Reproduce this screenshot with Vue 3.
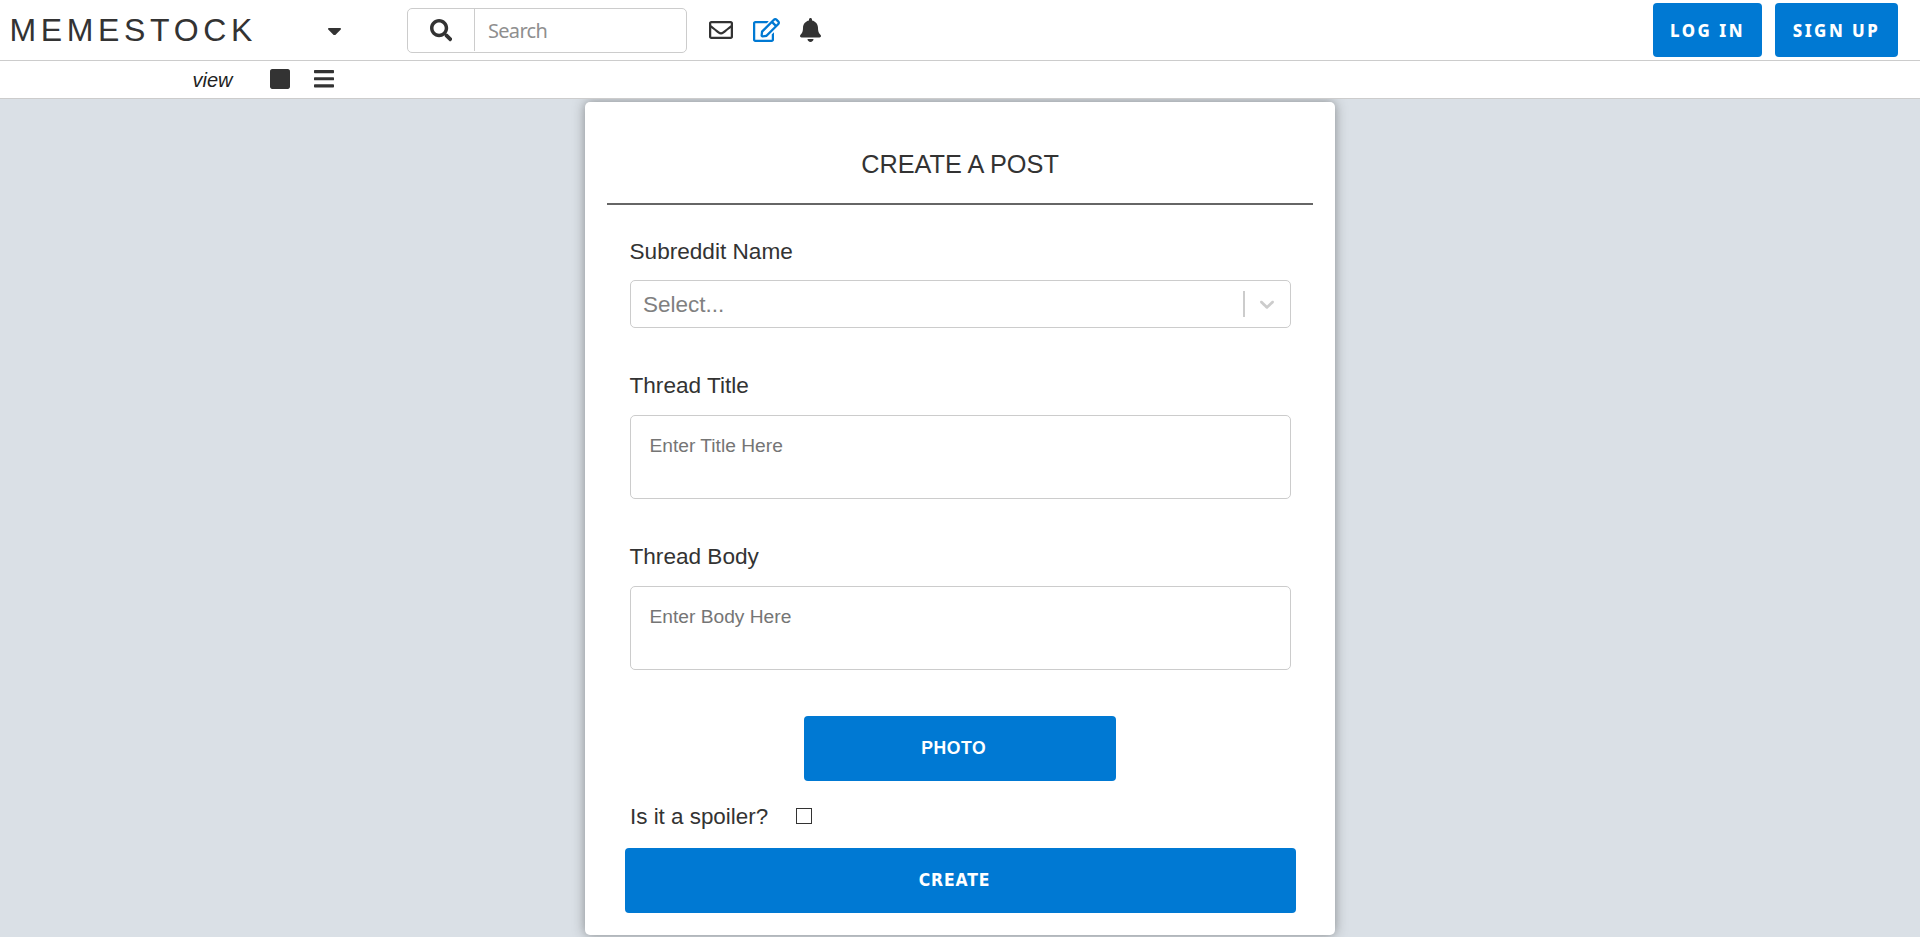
<script setup>
import { ref } from 'vue'

const search = ref('')
const title = ref('')
const body = ref('')
const spoiler = ref(false)
</script>

<template>
  <div class="page">
    <header class="navbar">
      <a class="brand">MEMESTOCK</a>
      <svg class="caret" viewBox="12 192 296 169" preserveAspectRatio="none"><path d="M31.3 192h257.3c17.8 0 26.7 21.5 14.1 34.1L174.1 354.800c-7.8 7.800-20.500 7.800-28.300 0L17.200 226.100C4.600 213.500 13.500 192 31.300 192z" /></svg>
      <form class="search" @submit.prevent>
        <button class="search-btn" type="submit" aria-label="Search">
          <svg viewBox="0 0 512 512"><path d="M505 442.700L405.300 343c-4.500-4.500-10.600-7-17-7H372c27.600-35.300 44-79.700 44-128C416 93.100 322.900 0 208 0S0 93.100 0 208s93.100 208 208 208c48.300 0 92.700-16.400 128-44v16.300c0 6.400 2.500 12.500 7 17l99.700 99.700c9.400 9.400 24.600 9.400 33.900 0l28.300-28.300c9.400-9.400 9.400-24.600.1-34zM208 336c-70.700 0-128-57.200-128-128 0-70.700 57.200-128 128-128 70.700 0 128 57.200 128 128 0 70.700-57.200 128-128 128z" /></svg>
        </button>
        <input v-model="search" class="search-input" type="text" placeholder="Search" />
      </form>
      <nav class="tools">
        <svg class="envelope" viewBox="0 0 512 512"><path d="M464 64H48C21.490 64 0 85.490 0 112v288c0 26.510 21.490 48 48 48h416c26.510 0 48-21.490 48-48V112c0-26.510-21.490-48-48-48zm0 48v40.805c-22.422 18.259-58.168 46.651-134.587 106.490-16.841 13.247-50.201 45.072-73.413 44.701-23.208.375-56.579-31.459-73.413-44.701C106.180 199.465 70.425 171.067 48 152.805V112h416zM48 400V214.398c22.914 18.251 55.409 43.862 104.938 82.646 21.857 17.205 60.134 55.186 103.062 54.955 42.717.231 80.509-37.199 103.053-54.947 49.528-38.783 82.032-64.401 104.947-82.653V400H48z" /></svg>
        <svg class="edit" viewBox="0 0 576 512"><path d="M402.300 344.900l32-32c5-5 13.700-1.500 13.700 5.700V464c0 26.500-21.500 48-48 48H48c-26.500 0-48-21.500-48-48V112c0-26.500 21.500-48 48-48h273.500c7.100 0 10.700 8.600 5.700 13.700l-32 32c-1.500 1.500-3.500 2.300-5.700 2.300H48v352h352V350.500c0-2.100.8-4.100 2.300-5.600zm156.600-201.800L296.300 405.700l-90.400 10c-26.200 2.900-48.500-19.200-45.600-45.600l10-90.400L432.900 17.100c22.900-22.900 59.900-22.900 82.700 0l43.200 43.200c22.900 22.900 22.900 60 .1 82.800zM460.100 174L402 115.900 216.200 301.800l-7.300 65.300 65.300-7.300L460.100 174zm64.800-79.700l-43.200-43.200c-4.100-4.100-10.800-4.100-14.800 0L436 82l58.100 58.100 30.900-30.900c4-4.200 4-10.800-.1-14.900z" /></svg>
        <svg class="bell" viewBox="0 0 448 512"><path d="M224 512c35.320 0 63.970-28.650 63.970-64H160.030c0 35.350 28.650 64 63.970 64zm215.390-149.710c-19.320-20.760-55.470-51.990-55.470-154.290 0-77.700-54.480-139.900-127.940-155.160V32c0-17.670-14.320-32-31.980-32s-31.980 14.330-31.980 32v20.840C118.560 68.100 64.080 130.300 64.080 208c0 102.300-36.150 133.530-55.470 154.290-6 6.450-8.660 14.160-8.610 21.710.11 16.400 12.980 32 32.100 32h383.800c19.120 0 32-15.600 32.100-32 .05-7.550-2.610-15.270-8.610-21.710z" /></svg>
      </nav>
      <div class="auth">
        <button class="btn login" type="button">LOG IN</button>
        <button class="btn signup" type="button">SIGN UP</button>
      </div>
    </header>

    <div class="viewbar">
      <span class="view-label">view</span>
      <svg class="square" viewBox="0 32 448 448"><path d="M400 32H48C21.500 32 0 53.500 0 80v352c0 26.500 21.500 48 48 48h352c26.500 0 48-21.500 48-48V80c0-26.500-21.500-48-48-48z" /></svg>
      <svg class="bars" viewBox="0 60 448 392"><path d="M16 132h416c8.837 0 16-7.163 16-16V76c0-8.837-7.163-16-16-16H16C7.163 60 0 67.163 0 76v40c0 8.837 7.163 16 16 16zm0 160h416c8.837 0 16-7.163 16-16v-40c0-8.837-7.163-16-16-16H16c-8.837 0-16 7.163-16 16v40c0 8.837 7.163 16 16 16zm0 160h416c8.837 0 16-7.163 16-16v-40c0-8.837-7.163-16-16-16H16c-8.837 0-16 7.163-16 16v40c0 8.837 7.163 16 16 16z" /></svg>
    </div>

    <main class="content">
      <form class="card" @submit.prevent>
        <h1>CREATE A POST</h1>
        <div class="rule"></div>

        <label class="label first">Subreddit Name</label>
        <div class="select">
          <span class="select-value">Select...</span>
          <span class="separator"></span>
          <svg class="chevron" viewBox="0 0 20 20"><path d="M4.516 7.548c0.436-0.446 1.043-0.481 1.576 0l3.908 3.747 3.908-3.747c0.533-0.481 1.141-0.446 1.574 0 0.436 0.445 0.408 1.197 0 1.615-0.406 0.418-4.695 4.502-4.695 4.502-0.217 0.223-0.502 0.335-0.787 0.335s-0.570-0.112-0.789-0.335c0 0-4.287-4.084-4.695-4.502s-0.436-1.170 0-1.615z" /></svg>
        </div>

        <label class="label title-label" for="title">Thread Title</label>
        <textarea id="title" v-model="title" placeholder="Enter Title Here"></textarea>

        <label class="label body-label" for="body">Thread Body</label>
        <textarea id="body" v-model="body" placeholder="Enter Body Here"></textarea>

        <button class="btn photo" type="button">PHOTO</button>

        <div class="spoiler">
          <label class="spoiler-label" for="spoiler">Is it a spoiler?</label>
          <input id="spoiler" v-model="spoiler" type="checkbox" />
        </div>

        <button class="btn create" type="submit">CREATE</button>
      </form>
    </main>
  </div>
</template>

<style>
body {
  overflow: hidden;
}
</style>

<style scoped>
.page,
.page * {
  box-sizing: border-box;
}

.page {
  height: 937px;
  display: flex;
  flex-direction: column;
  overflow: hidden;
  background: #dae0e6;
  color: #333;
  font-family: "Liberation Sans", Arial, sans-serif;
}

svg {
  display: block;
  flex: none;
  fill: #333;
}

button,
input,
textarea {
  margin: 0;
  font-family: inherit;
  outline: none;
}

.navbar {
  flex: none;
  height: 61px;
  display: flex;
  align-items: center;
  padding: 0 22px 0 9.500px;
  background: #fff;
  border-bottom: 1px solid #ccc;
}

.brand {
  width: 318.500px;
  font-size: 32px;
  line-height: 36px;
  letter-spacing: 4.650px;
}

.caret {
  width: 13px;
  height: 7.500px;
  margin-top: 3px;
}

.search {
  width: 280px;
  height: 45px;
  margin-left: 66px;
  display: flex;
  border: 1px solid #ccc;
  border-radius: 5px;
}

.search-btn {
  width: 67px;
  height: 42px;
  display: flex;
  align-items: center;
  justify-content: center;
  padding: 2px 0 0;
  background: none;
  border: 0;
  border-right: 1px solid #ccc;
}

.search-btn svg {
  width: 22.400px;
  height: 22.400px;
}

.search-input {
  flex: 1;
  min-width: 0;
  padding: 0 12px 0 13px;
  border: 0;
  border-radius: 5px;
  background: transparent;
  color: #333;
  font-family: "Noto Sans", sans-serif;
  font-size: 20px;
  letter-spacing: -0.700px;
}

.search-input::placeholder {
  color: #8f8f8f;
}

.tools {
  display: flex;
  align-items: center;
  margin-left: 22px;
}

.envelope {
  width: 24px;
  height: 24px;
}

.edit {
  width: 27px;
  height: 24px;
  margin-left: 20px;
  fill: #0079d3;
}

.bell {
  width: 21px;
  height: 24px;
  margin-left: 20px;
}

.auth {
  display: flex;
  gap: 13px;
  margin-left: auto;
}

.btn {
  padding: 0;
  border: 0;
  border-radius: 4px;
  background: #0079d3;
  color: #fff;
  font-family: "Noto Sans", sans-serif;
  font-weight: 700;
}

.login,
.signup {
  height: 54px;
  font-size: 16.800px;
  font-weight: 800;
  letter-spacing: 2.500px;
}

.login {
  width: 109px;
}

.signup {
  width: 123px;
}

.viewbar {
  flex: none;
  height: 38px;
  display: flex;
  align-items: center;
  padding-left: 192.500px;
  background: #fff;
  border-bottom: 1px solid #ccc;
}

.view-label {
  width: 77px;
  font-size: 20px;
  font-style: italic;
  line-height: 22px;
  margin-top: 1px;
  color: #222;
}

.square {
  width: 20px;
  height: 20px;
  margin-top: -1px;
}

.bars {
  width: 20px;
  height: 17.500px;
  margin-top: -1px;
  margin-left: 24.500px;
}

.content {
  flex: 1;
  min-height: 0;
  display: flex;
  justify-content: center;
  align-items: flex-start;
  padding-top: 3px;
  overflow: hidden;
}

.card {
  width: 750px;
  height: 833px;
  display: flex;
  flex-direction: column;
  padding: 42px 22px 22px;
  background: #fff;
  border-radius: 5px;
  box-shadow: 0 0 12px rgba(51, 51, 51, 0.500);
}

h1 {
  margin: 0 0 18px;
  font-size: 25.300px;
  font-weight: 400;
  line-height: 41px;
  text-align: center;
}

.rule {
  height: 2px;
  background: #666;
}

.label {
  margin-left: 22.500px;
  font-size: 22.600px;
  line-height: 26px;
}

.first {
  margin-top: 34px;
  margin-bottom: -1px;
}

.title-label {
  margin-top: 45px;
}

.body-label {
  margin-top: 45px;
}

.select,
textarea {
  width: 661px;
  margin: 16px 0 0 23px;
  background: #fff;
  border: 1px solid #ccc;
  border-radius: 5px;
}

.select {
  height: 48px;
  display: flex;
  align-items: center;
  padding: 0 11px 0 12px;
}

.select-value {
  flex: 1;
  padding-top: 1px;
  font-size: 22.500px;
  line-height: 26px;
  color: #808080;
}

.separator {
  width: 2px;
  height: 26px;
  margin-right: 10px;
  background: #ccc;
}

.chevron {
  width: 24px;
  height: 24px;
  fill: #ccc;
}

textarea {
  display: block;
  flex: none;
  height: 84px;
  padding: 18px 18.500px;
  font-size: 19.200px;
  line-height: 23px;
  color: #333;
  resize: none;
}

textarea::placeholder {
  color: #757575;
}

.photo,
.create {
  flex: none;
  height: 65px;
  font-size: 17.600px;
}

.photo {
  width: 312px;
  margin: 46px auto 0 197px;
  padding-right: 12.500px;
  font-family: "Liberation Sans", Arial, sans-serif;
  letter-spacing: 0.600px;
}

.create {
  width: 671px;
  margin: 19px 0 0 18px;
  padding: 0 12px 1px 0;
  font-family: "DejaVu Sans Condensed", "DejaVu Sans", sans-serif;
  font-stretch: condensed;
  font-size: 17.400px;
  letter-spacing: 0.900px;
}

.spoiler {
  display: flex;
  align-items: center;
  height: 26px;
  margin: 22px 0 0 23px;
}

.spoiler-label {
  width: 166px;
  padding-top: 1px;
  font-size: 22.400px;
  line-height: 26px;
}

.spoiler input {
  appearance: none;
  width: 16px;
  height: 16px;
  border: 1px solid #333;
  background: #fff;
}
</style>
